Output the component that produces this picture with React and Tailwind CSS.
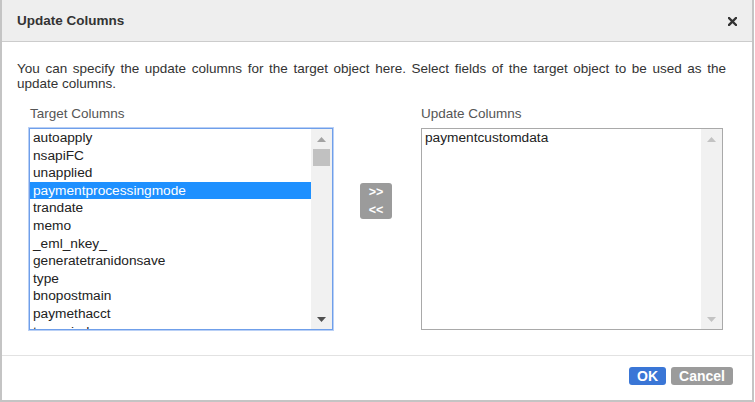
import React from "react";

const targetColumns = [
  "autoapply",
  "nsapiFC",
  "unapplied",
  "paymentprocessingmode",
  "trandate",
  "memo",
  "_eml_nkey_",
  "generatetranidonsave",
  "type",
  "bnopostmain",
  "paymethacct",
  "taxperiod",
];

const updateColumns = ["paymentcustomdata"];

function Scrollbar({ active }) {
  return (
    <div className="w-[21px] shrink-0 bg-[#f1f1f1] flex flex-col items-center">
      <div className="h-[20px] w-full flex items-center justify-center">
        <svg width="9" height="5" viewBox="0 0 9 5">
          <path d="M0 5 L4.5 0 L9 5 Z" fill={active ? "#a3a3a3" : "#c3c3c3"} />
        </svg>
      </div>
      {active && <div className="w-[17px] h-[17px] bg-[#c1c1c1]" />}
      <div className="flex-1" />
      <div className="h-[20px] w-full flex items-center justify-center">
        <svg width="9" height="5" viewBox="0 0 9 5">
          <path d="M0 0 L9 0 L4.5 5 Z" fill={active ? "#505050" : "#c3c3c3"} />
        </svg>
      </div>
    </div>
  );
}

function ListBox({ items, selected, focused, width }) {
  return (
    <div
      className={
        "h-[202px] flex bg-white overflow-hidden " +
        (focused
          ? "border border-[#6f9fea] shadow-[0_0_0_1px_#b9d0f6]"
          : "border border-[#a9a9a9]")
      }
      style={{ width }}
    >
      <div className="flex-1 overflow-hidden">
        {items.map((item) => (
          <div
            key={item}
            className={
              "h-[17.6px] leading-[17.6px] px-[3px] text-[13.7px] whitespace-nowrap " +
              (item === selected ? "bg-[#1e90ff] text-white" : "text-[#222]")
            }
          >
            {item}
          </div>
        ))}
      </div>
      <Scrollbar active={focused} />
    </div>
  );
}

export default function App() {
  return (
    <div
      className="w-[755px] h-[402px] bg-white"
      style={{ fontFamily: '"Liberation Sans", Arial, sans-serif' }}
    >
      <div className="w-[754px] h-[402px] border-x-2 border-b-2 border-[#c4c4c4] flex flex-col">
        {/* Header */}
        <div className="h-[42px] shrink-0 bg-[#eeeeee] border-b border-[#cccccc] flex items-center justify-between pl-[15px] pr-[15px] pt-[1px]">
          <span className="text-[13.5px] font-bold text-[#333]">Update Columns</span>
          <svg width="9" height="9" viewBox="0 0 9 9">
            <path d="M1 1 L8 8 M8 1 L1 8" stroke="#333" strokeWidth="2.4" strokeLinecap="square" />
          </svg>
        </div>

        {/* Body */}
        <div className="h-[314px] shrink-0 border-b border-[#e2e2e2] pt-[20px]">
          <p className="pl-[15px] pr-[26px] text-[13.5px] leading-[14.5px] text-[#333] text-justify">
            You can specify the update columns for the target object here. Select fields of the target object to be used as the update columns.
          </p>
          <div className="flex pl-[27px] mt-[15px]">
            <div className="flex flex-col">
              <div className="text-[13.5px] leading-[16px] text-[#555] pl-[1px] mb-[6px]">Target Columns</div>
              <ListBox items={targetColumns} selected="paymentprocessingmode" focused width="304px" />
            </div>
            <div className="flex flex-col ml-[27px] pt-[77px]">
              <button className="w-[32px] h-[18px] bg-[#9b9b9b] rounded-t-[3px] text-white font-bold text-[12.5px] leading-[18px]">
                &gt;&gt;
              </button>
              <button className="w-[32px] h-[18px] bg-[#9b9b9b] rounded-b-[3px] text-white font-bold text-[12.5px] leading-[18px]">
                &lt;&lt;
              </button>
            </div>
            <div className="flex flex-col ml-[29px]">
              <div className="text-[13.5px] leading-[16px] text-[#555] mb-[6px]">Update Columns</div>
              <ListBox items={updateColumns} width="302px" />
            </div>
          </div>
        </div>

        {/* Footer */}
        <div className="flex justify-end gap-[5px] pr-[19px] pt-[11px]">
          <button className="w-[37px] h-[18px] bg-[#3a76d6] rounded-[3px] text-white font-bold text-[14px] leading-[18px]">
            OK
          </button>
          <button className="w-[62px] h-[18px] bg-[#9b9b9b] rounded-[3px] text-white font-bold text-[14px] leading-[18px]">
            Cancel
          </button>
        </div>
      </div>
    </div>
  );
}
